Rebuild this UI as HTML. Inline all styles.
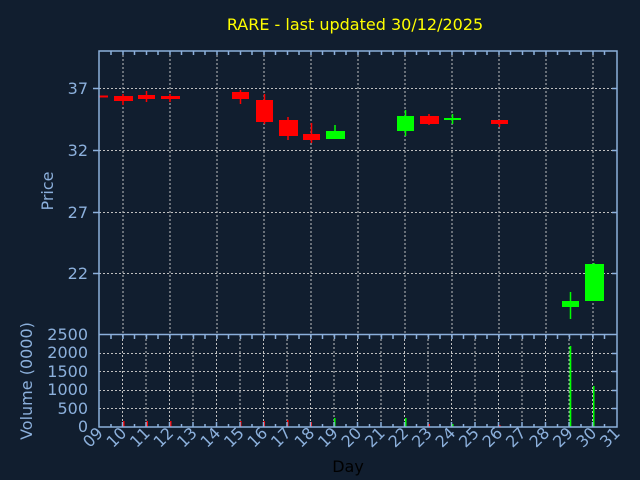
<!DOCTYPE html>
<html><head><meta charset="utf-8"><style>
html,body{margin:0;padding:0;background:#111e2f;}
svg{display:block;font-family:"DejaVu Sans","Liberation Sans",sans-serif;}
</style></head><body>
<svg width="640" height="480" viewBox="0 0 640 480" xmlns="http://www.w3.org/2000/svg">
<rect width="640" height="480" fill="#111e2f"/>
<text x="355" y="30" fill="#ffff00" font-size="16" text-anchor="middle">RARE - last updated 30/12/2025</text>
<g stroke="#c0c0c0" stroke-width="1" stroke-dasharray="2,2" fill="none">
<path d="M99 88.5H617M99 150.5H617M99 212.5H617M99 273.5H617"/>
<path d="M123 51V334M170 51V334M217 51V334M264 51V334M311 51V334M358 51V334M405 51V334M452 51V334M499 51V334M546 51V334M593 51V334"/>
<path d="M99 353.5H617M99 371.5H617M99 390.5H617M99 408.5H617"/>
<path d="M122.5 335V427M146 335V427M169.5 335V427M193 335V427M216.5 335V427M240 335V427M263.5 335V427M287 335V427M310.5 335V427M334 335V427M357.5 335V427M381 335V427M404.5 335V427M428 335V427M451.5 335V427M475 335V427M498.5 335V427M522 335V427M545.5 335V427M569 335V427M592.5 335V427"/>
</g>
<g fill="#ff0000" stroke="#ff0000" stroke-width="1.5">
<rect x="99" y="95.5" width="9" height="2" stroke="none"/>
<line x1="123" y1="94" x2="123" y2="105"/><rect x="114" y="96" width="19" height="5" stroke="none"/>
<line x1="146.5" y1="91" x2="146.5" y2="102"/><rect x="138" y="95" width="17" height="4" stroke="none"/>
<line x1="170" y1="94" x2="170" y2="102"/><rect x="161" y="96" width="19" height="3" stroke="none"/>
<line x1="240.5" y1="90" x2="240.5" y2="104"/><rect x="232" y="92" width="17" height="7" stroke="none"/>
<line x1="264.5" y1="94" x2="264.5" y2="124"/><rect x="256" y="100" width="17" height="22" stroke="none"/>
<line x1="288" y1="117" x2="288" y2="140"/><rect x="279" y="120" width="19" height="16" stroke="none"/>
<line x1="311.5" y1="123" x2="311.5" y2="143"/><rect x="303" y="134" width="17" height="6" stroke="none"/>
<line x1="429" y1="114" x2="429" y2="125"/><rect x="420" y="116" width="19" height="8" stroke="none"/>
<line x1="499.5" y1="120" x2="499.5" y2="127"/><rect x="491" y="120" width="17" height="4" stroke="none"/>
</g>
<g fill="#00ff00" stroke="#00ff00" stroke-width="1.5">
<line x1="335" y1="125" x2="335" y2="139"/><rect x="326" y="131" width="19" height="8" stroke="none"/>
<line x1="405.5" y1="110" x2="405.5" y2="136"/><rect x="397" y="116" width="17" height="15" stroke="none"/>
<line x1="452.5" y1="114" x2="452.5" y2="124"/><rect x="444" y="118" width="17" height="2" stroke="none"/>
<line x1="570.5" y1="292" x2="570.5" y2="319"/><rect x="562" y="301" width="17" height="6" stroke="none"/>
<line x1="594" y1="263" x2="594" y2="301"/><rect x="585" y="264" width="19" height="37" stroke="none"/>
</g>
<g>
<g fill="#ff0000"><rect x="123" y="421" width="1.5" height="6"/><rect x="146.5" y="421" width="1.5" height="6"/><rect x="170" y="421" width="1.5" height="6"/><rect x="240" y="421" width="1.5" height="6"/><rect x="263.5" y="421" width="1.5" height="6"/><rect x="287" y="420" width="1.5" height="7"/><rect x="310.5" y="422" width="1.5" height="5"/><rect x="428.5" y="424" width="1.5" height="3"/><rect x="499" y="425" width="1.5" height="2"/></g>
<g fill="#00ff00"><rect x="334" y="418" width="1.5" height="9"/><rect x="405" y="418" width="1.5" height="9"/><rect x="452" y="424" width="1.5" height="3"/><rect x="569.5" y="346" width="1.8" height="81"/><rect x="593" y="386" width="1.5" height="41"/></g>
</g>
<g stroke="#8cb0dc" stroke-width="1.5" fill="none">
<rect x="99" y="51" width="518" height="376"/>
<path d="M99 334.5H617"/>
<path d="M93 88.5H99M93 150.5H99M93 212.5H99M93 273.5H99M612 88.5H617M612 150.5H617M612 212.5H617M612 273.5H617"/>
<path d="M612 353.5H617M612 371.5H617M612 390.5H617M612 408.5H617"/>
<path d="M111 51v4M123 51v4M134.5 51v4M146.5 51v4M158 51v4M170 51v4M181.5 51v4M193.5 51v4M205 51v4M217 51v4M228.5 51v4M240.5 51v4M252 51v4M264 51v4M275.5 51v4M287.5 51v4M299 51v4M311 51v4M322.5 51v4M334.5 51v4M346 51v4M358 51v4M369.5 51v4M381.5 51v4M393 51v4M405 51v4M416.5 51v4M428.5 51v4M440 51v4M452 51v4M463.5 51v4M475.5 51v4M487 51v4M499 51v4M510.5 51v4M522.5 51v4M534 51v4M546 51v4M557.5 51v4M569.5 51v4M581 51v4M593 51v4M604.5 51v4"/>
<path d="M111 335v4M123 335v4M134.5 335v4M146.5 335v4M158 335v4M170 335v4M181.5 335v4M193.5 335v4M205 335v4M217 335v4M228.5 335v4M240.5 335v4M252 335v4M264 335v4M275.5 335v4M287.5 335v4M299 335v4M311 335v4M322.5 335v4M334.5 335v4M346 335v4M358 335v4M369.5 335v4M381.5 335v4M393 335v4M405 335v4M416.5 335v4M428.5 335v4M440 335v4M452 335v4M463.5 335v4M475.5 335v4M487 335v4M499 335v4M510.5 335v4M522.5 335v4M534 335v4M546 335v4M557.5 335v4M569.5 335v4M581 335v4M593 335v4M604.5 335v4"/>
<path d="M111 427v-3M134.5 427v-3M158 427v-3M181.5 427v-3M205 427v-3M228.5 427v-3M252 427v-3M275.5 427v-3M299 427v-3M322.5 427v-3M346 427v-3M369.5 427v-3M393 427v-3M416.5 427v-3M440 427v-3M463.5 427v-3M487 427v-3M510.5 427v-3M534 427v-3M557.5 427v-3M581 427v-3M604.5 427v-3M122.5 427v-5M146 427v-5M169.5 427v-5M193 427v-5M216.5 427v-5M240 427v-5M263.5 427v-5M287 427v-5M310.5 427v-5M334 427v-5M357.5 427v-5M381 427v-5M404.5 427v-5M428 427v-5M451.5 427v-5M475 427v-5M498.5 427v-5M522 427v-5M545.5 427v-5M569 427v-5M592.5 427v-5"/>
</g>
<g fill="#8cb0dc" font-size="16" text-anchor="end">
<text x="88" y="94">37</text><text x="88" y="156">32</text><text x="88" y="218">27</text><text x="88" y="279">22</text>
<text x="88" y="340">2500</text><text x="88" y="358">2000</text><text x="88" y="377">1500</text><text x="88" y="395">1000</text><text x="88" y="414">500</text><text x="88" y="432">0</text>
</g>
<text transform="translate(53,191) rotate(-90)" fill="#8cb0dc" font-size="16" text-anchor="middle">Price</text>
<text transform="translate(32,381) rotate(-90)" fill="#8cb0dc" font-size="16" text-anchor="middle">Volume (0000)</text>
<text x="348" y="472" fill="#000000" font-size="16" text-anchor="middle">Day</text>
<g fill="#8cb0dc" font-size="16" text-anchor="end">
<text transform="translate(104,434) rotate(-45)">09</text>
<text transform="translate(127.5,434) rotate(-45)">10</text>
<text transform="translate(151,434) rotate(-45)">11</text>
<text transform="translate(174.5,434) rotate(-45)">12</text>
<text transform="translate(198,434) rotate(-45)">13</text>
<text transform="translate(221.5,434) rotate(-45)">14</text>
<text transform="translate(245,434) rotate(-45)">15</text>
<text transform="translate(268.5,434) rotate(-45)">16</text>
<text transform="translate(292,434) rotate(-45)">17</text>
<text transform="translate(315.5,434) rotate(-45)">18</text>
<text transform="translate(339,434) rotate(-45)">19</text>
<text transform="translate(362.5,434) rotate(-45)">20</text>
<text transform="translate(386,434) rotate(-45)">21</text>
<text transform="translate(409.5,434) rotate(-45)">22</text>
<text transform="translate(433,434) rotate(-45)">23</text>
<text transform="translate(456.5,434) rotate(-45)">24</text>
<text transform="translate(480,434) rotate(-45)">25</text>
<text transform="translate(503.5,434) rotate(-45)">26</text>
<text transform="translate(527,434) rotate(-45)">27</text>
<text transform="translate(550.5,434) rotate(-45)">28</text>
<text transform="translate(574,434) rotate(-45)">29</text>
<text transform="translate(597.5,434) rotate(-45)">30</text>
<text transform="translate(621,434) rotate(-45)">31</text>
</g>
</svg>
</body></html>
